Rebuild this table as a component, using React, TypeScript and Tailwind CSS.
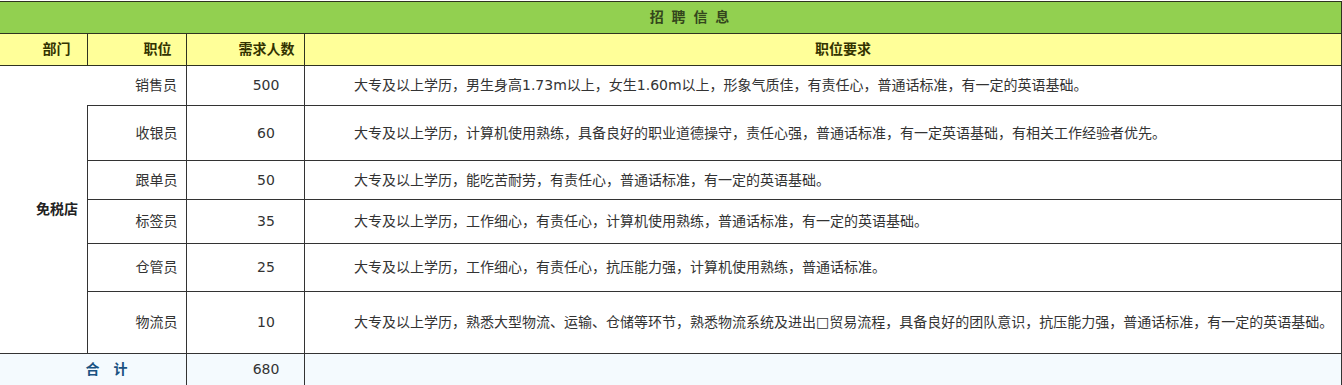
const jobs = [
  {
    title: '销售员',
    count: '500',
    req: '大专及以上学历，男生身高1.73m以上，女生1.60m以上，形象气质佳，有责任心，普通话标准，有一定的英语基础。',
  },
  {
    title: '收银员',
    count: '60',
    req: '大专及以上学历，计算机使用熟练，具备良好的职业道德操守，责任心强，普通话标准，有一定英语基础，有相关工作经验者优先。',
  },
  {
    title: '跟单员',
    count: '50',
    req: '大专及以上学历，能吃苦耐劳，有责任心，普通话标准，有一定的英语基础。',
  },
  {
    title: '标签员',
    count: '35',
    req: '大专及以上学历，工作细心，有责任心，计算机使用熟练，普通话标准，有一定的英语基础。',
  },
  {
    title: '仓管员',
    count: '25',
    req: '大专及以上学历，工作细心，有责任心，抗压能力强，计算机使用熟练，普通话标准。',
  },
  {
    title: '物流员',
    count: '10',
    req: '大专及以上学历，熟悉大型物流、运输、仓储等环节，熟悉物流系统及进出□贸易流程，具备良好的团队意识，抗压能力强，普通话标准，有一定的英语基础。',
  },
];

function App() {
  return (
    <div
      className="w-[1342px] h-[385px] overflow-hidden bg-white pt-[1px] text-[14px] text-[#333]"
      style={{ fontFamily: '"DejaVu Sans", "Noto Sans CJK SC", sans-serif' }}
    >
      {/* title bar */}
      <div className="h-[33px] flex items-center justify-center pl-[38px] bg-[#92d050] border-t border-b border-r border-[#2f3320]">
        <span className="font-bold text-[#34461c] [word-spacing:3px]">招 聘 信 息</span>
      </div>

      <div className="grid grid-cols-[87px_100px_118px_1fr] grid-rows-[32px_40px_55px_39px_44px_48px_62px_31px]">
        {/* header */}
        <div className="flex items-center justify-center pl-[26px] bg-[#ffff99] border-b border-[#2f3320] font-bold text-[#333300]">
          部门
        </div>
        <div className="flex items-center justify-center pl-[41px] bg-[#ffff99] border-l border-b border-r border-[#2f3320] font-bold text-[#333300]">
          职位
        </div>
        <div className="flex items-center justify-center pl-[42px] bg-[#ffff99] border-b border-r border-[#2f3320] font-bold text-[#333300]">
          需求人数
        </div>
        <div className="flex items-center justify-center pl-10 bg-[#ffff99] border-b border-r border-[#2f3320] font-bold text-[#333300]">
          职位要求
        </div>

        <div className="row-span-6 flex items-center justify-center pl-[27px] border-b border-[#333] font-bold text-[#222]">
          免税店
        </div>

        {jobs.map((j, i) => (
          <div key={j.title} className="contents">
            <div
              className={`flex items-center justify-center pl-[39px] border-b border-r border-[#333] ${i === 0 ? 'border-l-0' : 'border-l'}`}
            >
              {j.title}
            </div>
            <div className="flex items-center justify-center pl-[41px] border-b border-r border-[#333]">
              {j.count}
            </div>
            <div className="flex items-center pl-[49px] border-b border-r border-[#333] whitespace-nowrap">
              {j.req}
            </div>
          </div>
        ))}

        {/* total */}
        <div className="col-span-2 flex items-center justify-center pl-[27px] bg-[#f4fafe] border-r border-[#333] font-bold text-[#1b5282]">
          合　计
        </div>
        <div className="flex items-center justify-center pl-[41px] bg-[#f4fafe] border-r border-[#333]">680</div>
        <div className="bg-[#f4fafe] border-r border-[#333]"></div>
      </div>
    </div>
  );
}

export default App;
